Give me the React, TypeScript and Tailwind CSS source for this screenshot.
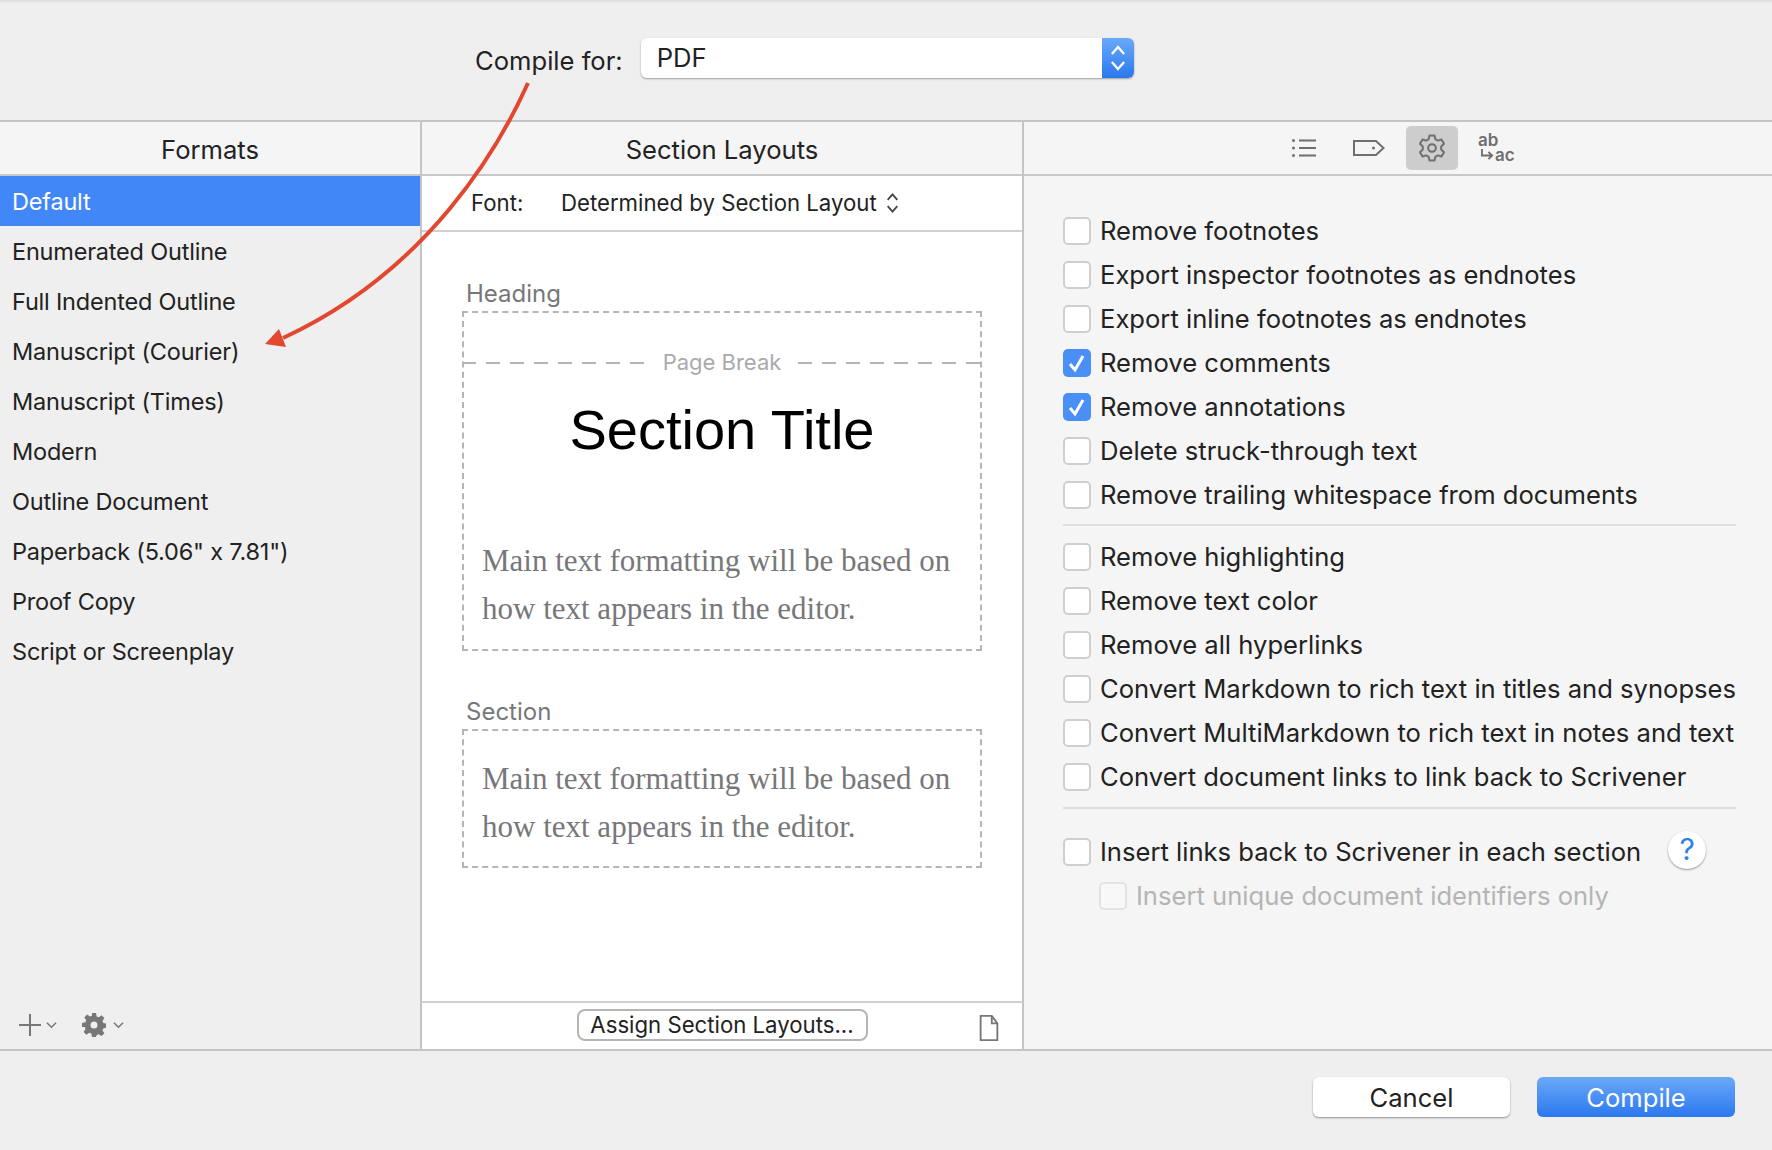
import React from 'react';

const formats = [
  'Default',
  'Enumerated Outline',
  'Full Indented Outline',
  'Manuscript (Courier)',
  'Manuscript (Times)',
  'Modern',
  'Outline Document',
  'Paperback (5.06" x 7.81")',
  'Proof Copy',
  'Script or Screenplay',
];

const Chevrons = ({ className }: { className: string }) => (
  <svg viewBox="0 0 14 22" className={className} fill="none" stroke="currentColor" strokeWidth="1.7">
    <path d="M2.5 8 7 3l4.5 5M2.5 14 7 19l4.5-5" />
  </svg>
);

const Caret = () => (
  <svg viewBox="0 0 12 8" className="w-[11px] h-[8px] text-[#777]" fill="none" stroke="currentColor" strokeWidth="1.6">
    <path d="M1 1.5 6 6.5l5-5" />
  </svg>
);

const Check = ({ label, checked, disabled }: { label: string; checked?: boolean; disabled?: boolean }) => (
  <div className="h-[44px] flex items-center gap-[9px]">
    <div
      className={
        checked
          ? 'w-[28px] h-[28px] rounded-[5px] bg-[#4a8ff5] flex items-center justify-center'
          : disabled
            ? 'w-[28px] h-[28px] rounded-[5px] bg-[#f8f8f8] border-2 border-[#e2e2e2]'
            : 'w-[28px] h-[28px] rounded-[5px] bg-white border-2 border-[#cfcfcf]'
      }
    >
      {checked && (
        <svg viewBox="0 0 28 28" className="w-[28px] h-[28px]" fill="none" stroke="white" strokeWidth="3">
          <path d="M7 15l5 6 8-14" />
        </svg>
      )}
    </div>
    <span className={disabled ? 'text-[#b4b4b4]' : 'text-[#222]'}>{label}</span>
  </div>
);

const Preview = () => (
  <div className="text-[31px] leading-[48px] text-[#77777a] pl-[18px] font-['Liberation_Serif',serif]">
    Main text formatting will be based on
    <br />
    how text appears in the editor.
  </div>
);

export default function App() {
  return (
    <div className="w-[1772px] h-[1150px] overflow-hidden relative flex flex-col bg-[#efefef] font-['Inter',sans-serif] text-[25.6px] text-[#222]">
      {/* top bar */}
      <div className="h-[122px] shrink-0 border-b-2 border-[#c4c4c4] bg-gradient-to-b from-[#dcdcdc] from-0% to-[#efefef] to-[3%] flex justify-start pl-[475px] pt-[38px] gap-[18px]">
        <div className="h-[40px] flex items-center pt-[6px]">Compile for:</div>
        <div className="w-[493px] h-[40px] rounded-[6px] bg-white shadow-[0_1px_2px_rgba(0,0,0,0.35)] flex justify-between overflow-hidden">
          <span className="pl-[16px] leading-[40px]">PDF</span>
          <div className="w-[32px] bg-gradient-to-b from-[#6aa9f9] to-[#2a77ee] text-white flex items-center justify-center">
            <Chevrons className="w-[20px] h-[30px]" />
          </div>
        </div>
      </div>

      <div className="h-[929px] shrink-0 flex border-b-2 border-[#c4c4c4]">
        {/* formats */}
        <div className="w-[422px] shrink-0 border-r-2 border-[#c4c4c4] flex flex-col">
          <div className="h-[54px] shrink-0 bg-[#f5f5f5] border-b-2 border-[#c8c8c8] flex items-center justify-center pt-[4px]">Formats</div>
          <div className="flex-1 text-[23.5px] tracking-[-0.2px]">
            {formats.map((f, i) => (
              <div
                key={f}
                className={i === 0 ? 'h-[50px] flex items-center pl-[12px] pt-[2px] bg-[#4287f7] text-white' : 'h-[50px] flex items-center pl-[12px] pt-[2px]'}
              >
                {f}
              </div>
            ))}
          </div>
          <div className="h-[44px] shrink-0 flex items-start pl-[18px] gap-[4px] pt-[8px] text-[#777]">
            <svg viewBox="0 0 24 24" className="w-[24px] h-[24px]" stroke="currentColor" strokeWidth="2">
              <path d="M12 1v22M1 12h22" />
            </svg>
            <div className="h-[24px] flex items-center mr-[21px]"><Caret /></div>
            <svg viewBox="0 0 24 24" className="w-[24px] h-[24px]" fill="currentColor">
              <path
                fillRule="evenodd"
                d="M10 0h4l.7 3.4 2 .8L19.600 2.300l2.800 2.800-1.900 2.900.8 2 3.400.7v4l-3.400.7-.8 2 1.900 2.900-2.800 2.800-2.900-1.900-2 .8L14 24h-4l-.7-3.400-2-.8-2.900 1.900-2.800-2.800 1.900-2.900-.8-2L0 14v-4l3.400-.7.8-2-1.900-2.900 2.800-2.800 2.900 1.900 2-.8zM12 8.500a3.500 3.500 0 1 0 0 7 3.500 3.500 0 0 0 0-7z"
              />
            </svg>
            <div className="h-[24px] flex items-center ml-[3px]"><Caret /></div>
          </div>
        </div>

        {/* section layouts */}
        <div className="w-[602px] shrink-0 border-r-2 border-[#c4c4c4] bg-white flex flex-col">
          <div className="h-[54px] shrink-0 bg-[#f5f5f5] border-b-2 border-[#c8c8c8] flex items-center justify-center pt-[4px]">Section Layouts</div>
          <div className="h-[56px] shrink-0 border-b-2 border-[#d0d0d0] flex items-center text-[22.2px] pl-[49px]">
            <span className="w-[90px]">Font:</span>
            <span>Determined by Section Layout</span>
            <Chevrons className="w-[15px] h-[24px] ml-[8px] text-[#444]" />
          </div>
          <div className="flex-1 px-[40px] pt-[45px]">
            <div className="h-[34px] text-[24px] text-[#77777a] pl-[4px] leading-[34px]">Heading</div>
            <div className="h-[340px] border-2 border-dashed border-[#b5b5b5] flex flex-col">
              <div className="h-[50px] relative shrink-0">
                <div className="absolute -left-[2px] -right-[2px] top-[49px] h-[2px] bg-[repeating-linear-gradient(90deg,#b5b5b5_0_14px,transparent_14px_24px)]"></div>
                <div className="absolute left-1/2 -translate-x-1/2 top-[32px] px-[12px] bg-white text-[22px] text-[#aaaaad] leading-[34px]">Page Break</div>
              </div>
              <div className="h-[132px] shrink-0 flex items-center justify-center text-[56px] text-black pt-[2px] font-['Liberation_Sans',sans-serif]">Section Title</div>
              <div className="mt-[42px]"><Preview /></div>
            </div>
            <div className="mt-[44px] h-[34px] text-[24px] text-[#77777a] pl-[4px] leading-[34px]">Section</div>
            <div className="h-[139px] border-2 border-dashed border-[#b5b5b5] flex items-center pt-[9px]">
              <Preview />
            </div>
          </div>
          <div className="h-[48px] shrink-0 border-t-2 border-[#d0d0d0] relative flex items-center justify-center pb-[2px]">
            <div className="w-[291px] h-[32px] rounded-[8px] border-2 border-[#b5b5b5] flex items-center justify-center text-[22.2px]">
              Assign Section Layouts...
            </div>
            <svg viewBox="0 0 22 28" className="absolute left-[556px] top-[12px] w-[22px] h-[26px] text-[#777]" fill="none" stroke="currentColor" strokeWidth="2">
              <path d="M2 1h12l6 8v18H2z" />
              <path d="M14 1v8h6" />
            </svg>
          </div>
        </div>

        {/* options */}
        <div className="flex-1 bg-[#f5f5f5] flex flex-col">
          <div className="h-[54px] shrink-0 border-b-2 border-[#c8c8c8] flex items-center pl-[267px] text-[#6f6f6f]">
            <svg viewBox="0 0 26 20" className="w-[26px] h-[20px] mr-[36px]" fill="none" stroke="currentColor" strokeWidth="2">
              <circle cx="2.500" cy="2.500" r="1.500" fill="currentColor" stroke="none" />
              <circle cx="2.500" cy="10" r="1.500" fill="currentColor" stroke="none" />
              <circle cx="2.500" cy="17.500" r="1.500" fill="currentColor" stroke="none" />
              <path d="M8 2.500h17M8 10h17M8 17.500h17" />
            </svg>
            <svg viewBox="0 0 32 18" className="w-[32px] h-[18px] mr-[21px]" fill="none" stroke="currentColor" strokeWidth="2">
              <path d="M1 2h22l7.500 7-7.500 7H1z" />
              <circle cx="20.500" cy="9" r="1.500" fill="currentColor" stroke="none" />
            </svg>
            <div className="w-[52px] h-[44px] rounded-[5px] bg-[#cdcdcd] flex items-center justify-center mr-[20px]">
              <svg viewBox="0 0 28 28" className="w-[28px] h-[28px]" fill="none" stroke="currentColor" strokeWidth="2" strokeLinejoin="round">
                <path d="M11.500 1.500h5l.9 3.700 2.400 1.400 3.700-1.100 2.500 4.300-2.800 2.600v3.200l2.800 2.600-2.500 4.300-3.700-1.100-2.400 1.400-.9 3.700h-5l-.9-3.700-2.400-1.400-3.700 1.100L2 18.200l2.800-2.600v-3.200L2 9.800l2.500-4.300 3.700 1.100 2.400-1.400z" />
                <circle cx="14" cy="14" r="3.800" />
              </svg>
            </div>
            <div className="relative w-[38px] h-[30px] text-[17px] leading-[15px] font-semibold">
              <div className="absolute left-0 top-0">ab</div>
              <div className="absolute left-[17px] top-[15px]">ac</div>
              <svg viewBox="0 0 16 14" className="absolute left-[2px] top-[16px] w-[15px] h-[13px]" fill="none" stroke="currentColor" strokeWidth="2">
                <path d="M2 0v7h11M9 3l4 4-4 4" />
              </svg>
            </div>
          </div>
          <div className="flex-1 pl-[39px] pr-[36px] pt-[33px]">
            <Check label="Remove footnotes" />
            <Check label="Export inspector footnotes as endnotes" />
            <Check label="Export inline footnotes as endnotes" />
            <Check label="Remove comments" checked />
            <Check label="Remove annotations" checked />
            <Check label="Delete struck-through text" />
            <Check label="Remove trailing whitespace from documents" />
            <div className="border-t-2 border-[#dedede] mt-[7px] mb-[9px]"></div>
            <Check label="Remove highlighting" />
            <Check label="Remove text color" />
            <Check label="Remove all hyperlinks" />
            <Check label="Convert Markdown to rich text in titles and synopses" />
            <Check label="Convert MultiMarkdown to rich text in notes and text" />
            <Check label="Convert document links to link back to Scrivener" />
            <div className="border-t-2 border-[#dedede] mt-[8px] mb-[21px]"></div>
            <div className="flex items-center">
              <Check label="Insert links back to Scrivener in each section" />
              <div className="ml-[27px] w-[38px] h-[38px] rounded-full bg-white shadow-[0_1px_2px_rgba(0,0,0,0.4)] flex items-center justify-center text-[#2f7fe8] text-[30px] -mt-[5px]">?</div>
            </div>
            <div className="pl-[36px]">
              <Check label="Insert unique document identifiers only" disabled />
            </div>
          </div>
        </div>
      </div>

      {/* footer */}
      <div className="flex-1 flex justify-end items-start gap-[27px] pr-[37px] pt-[26px]">
        <div className="w-[197px] h-[40px] rounded-[6px] bg-white shadow-[0_1px_2px_rgba(0,0,0,0.4)] flex items-center justify-center pt-[3px]">Cancel</div>
        <div className="w-[198px] h-[40px] rounded-[6px] bg-gradient-to-b from-[#6aa9f9] to-[#2a77ee] text-white flex items-center justify-center pt-[3px]">Compile</div>
      </div>

      {/* annotation arrow */}
      <svg viewBox="0 0 1772 1150" className="absolute inset-0 w-[1772px] h-[1150px] pointer-events-none">
        <path d="M528 83C500 145 430 270 283 338" fill="none" stroke="#e2472f" strokeWidth="4" />
        <path d="M265 344l14-15 7 18z" fill="#e2472f" />
      </svg>
    </div>
  );
}
